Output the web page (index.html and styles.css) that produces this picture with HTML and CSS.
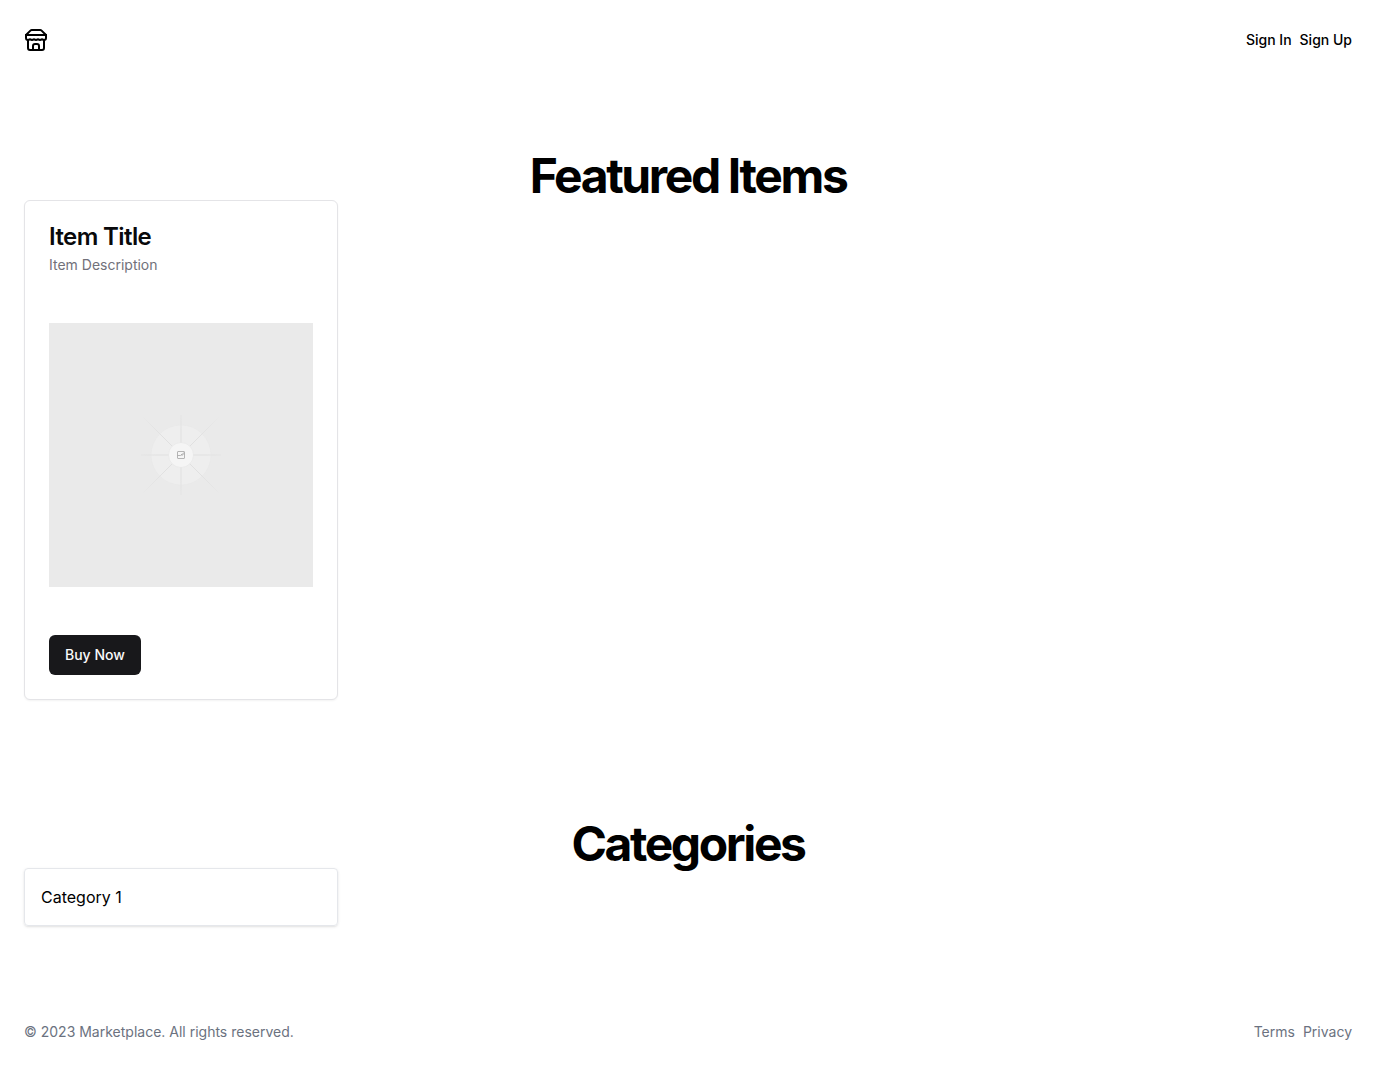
FILE: index.html
```html
<!DOCTYPE html>
<html lang="en">
<head>
  <meta charset="utf-8">
  <meta name="viewport" content="width=device-width, initial-scale=1">
  <title>Marketplace</title>
  <link rel="stylesheet" href="styles.css">
</head>
<body>
  <header class="site-header">
    <a class="logo" href="#" aria-label="Marketplace">
      <svg viewBox="0 0 24 24" width="24" height="24" fill="none" stroke="currentColor" stroke-width="2" stroke-linecap="round" stroke-linejoin="round" aria-hidden="true">
        <path d="m2 7 4.41-4.41A2 2 0 0 1 7.83 2h8.34a2 2 0 0 1 1.42.59L22 7"/>
        <path d="M4 12v8a2 2 0 0 0 2 2h12a2 2 0 0 0 2-2v-8"/>
        <path d="M15 22v-4a2 2 0 0 0-2-2h-2a2 2 0 0 0-2 2v4"/>
        <path d="M2 7h20"/>
        <path d="M22 7v3a2 2 0 0 1-2 2a2.7 2.7 0 0 1-1.59-.63.7.7 0 0 0-.82 0A2.7 2.7 0 0 1 16 12a2.7 2.7 0 0 1-1.59-.63.7.7 0 0 0-.82 0A2.7 2.7 0 0 1 12 12a2.7 2.7 0 0 1-1.59-.63.7.7 0 0 0-.82 0A2.7 2.7 0 0 1 8 12a2.7 2.7 0 0 1-1.59-.63.7.7 0 0 0-.82 0A2.7 2.7 0 0 1 4 12a2 2 0 0 1-2-2V7"/>
      </svg>
    </a>
    <nav class="links account-links" aria-label="Account">
      <a href="#">Sign In</a>
      <a href="#">Sign Up</a>
    </nav>
  </header>

  <main class="content">
    <section class="section">
      <h1 class="section-title">Featured Items</h1>
      <div class="grid">
        <article class="card">
          <div class="card-header">
            <h2 class="card-title">Item Title</h2>
            <p class="card-description">Item Description</p>
          </div>
          <div class="card-content">
            <svg class="card-image" viewBox="0 0 264 264" role="img" aria-label="Item image">
              <defs>
                <radialGradient id="ray" gradientUnits="userSpaceOnUse" cx="132" cy="132" r="56">
                  <stop offset="0.4" stop-color="#e0e0e0"/>
                  <stop offset="0.7" stop-color="#e4e4e4"/>
                  <stop offset="1" stop-color="#eaeaea"/>
                </radialGradient>
              </defs>
              <rect width="264" height="264" fill="#eaeaea"/>
              <circle cx="132" cy="132" r="30" fill="#eeeeee" stroke="#e7e7e7" stroke-width=".5"/>
              <path d="M132 92v80M92 132h80M94 94l76 76M170 94l-76 76" stroke="url(#ray)" fill="none"/>
              <circle cx="132" cy="132" r="12.5" fill="#f5f5f5" stroke="#e2e2e2" stroke-width=".5"/>
              <g fill="none" stroke="#a3a3a3" stroke-width=".8">
                <rect x="128.5" y="128.5" width="7" height="7" rx=".5"/>
                <path d="M128.5 132.5h3l1.5-1.5h2.5M133 131v2M134 130h.8"/>
              </g>
            </svg>
          </div>
          <div class="card-footer">
            <button class="button" type="button">Buy Now</button>
          </div>
        </article>
      </div>
    </section>

    <section class="section">
      <h1 class="section-title">Categories</h1>
      <div class="grid">
        <a class="category" href="#">Category 1</a>
      </div>
    </section>
  </main>

  <footer class="site-footer">
    <p>© 2023 Marketplace. All rights reserved.</p>
    <nav class="links" aria-label="Legal">
      <a href="#">Terms</a>
      <a href="#">Privacy</a>
    </nav>
  </footer>
</body>
</html>
```
FILE: styles.css
```css
*,
*::before,
*::after {
  box-sizing: border-box;
}

body {
  display: flex;
  flex-direction: column;
  min-height: 100vh;
  margin: 0;
  background: #fff;
  color: #000;
  font-family: Inter, "Liberation Sans", sans-serif;
  font-size: 16px;
  line-height: 24px;
}

h1,
h2,
p {
  margin: 0;
}

a {
  color: inherit;
  text-decoration: none;
}

svg {
  display: block;
}

.site-header,
.site-footer {
  display: flex;
  align-items: center;
  justify-content: space-between;
  padding: 24px;
  font-size: 14px;
  line-height: 20px;
}

.site-header {
  min-height: 80px;
}

.site-footer {
  color: #6b7280;
}

.links {
  display: flex;
  gap: 8px;
}

.account-links {
  font-weight: 500;
}

.content {
  display: flex;
  flex: 1;
  flex-direction: column;
  gap: 24px;
  padding: 24px;
}

.section {
  padding: 48px 0;
}

.section-title {
  font-size: 48px;
  font-weight: 700;
  letter-spacing: -0.05em;
  line-height: 48px;
  text-align: center;
}

.grid {
  display: grid;
  grid-template-columns: repeat(4, minmax(0, 1fr));
  gap: 24px;
}

.card {
  border: 1px solid #e4e4e7;
  border-radius: 6px;
  background: #fff;
  box-shadow: 0 1px 2px rgb(0 0 0 / 5%);
  color: #09090b;
}

.card-header {
  display: flex;
  flex-direction: column;
  gap: 6px;
  padding: 24px;
}

.card-title {
  font-size: 24px;
  font-weight: 600;
  letter-spacing: -0.025em;
  line-height: 24px;
}

.card-description {
  color: #71717a;
  font-size: 14px;
  line-height: 20px;
}

.card-content,
.card-footer {
  padding: 24px;
}

.card-image {
  width: 100%;
  height: auto;
}

.button {
  height: 40px;
  padding: 0 16px;
  border: 0;
  border-radius: 6px;
  background: #18181b;
  color: #fafafa;
  font: 500 14px/20px Inter, "Liberation Sans", sans-serif;
  cursor: pointer;
}

.card-footer {
  display: flex;
}

.category {
  padding: 16px;
  border: 1px solid #e5e7eb;
  border-radius: 4px;
  box-shadow: 0 1px 3px rgb(0 0 0 / 10%), 0 1px 2px -1px rgb(0 0 0 / 10%);
}

@media (max-width: 1023px) {
  .grid {
    grid-template-columns: repeat(2, minmax(0, 1fr));
  }
}

@media (max-width: 639px) {
  .grid {
    grid-template-columns: minmax(0, 1fr);
  }
}
```
